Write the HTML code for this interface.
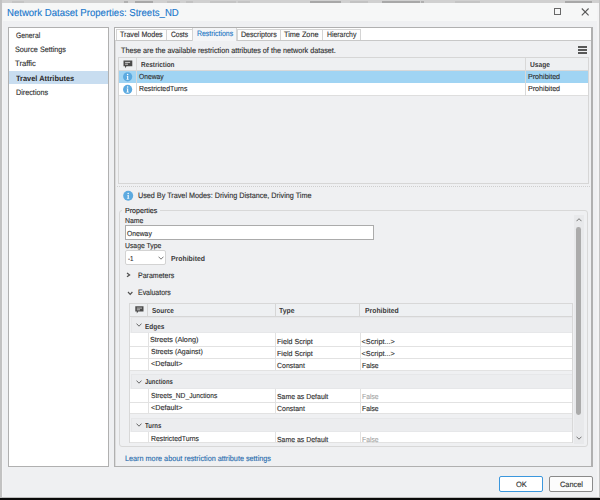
<!DOCTYPE html>
<html><head><meta charset="utf-8">
<style>
html,body{margin:0;padding:0;}
body{width:600px;height:500px;position:relative;overflow:hidden;background:#eff0f2;font-family:"Liberation Sans",sans-serif;text-rendering:geometricPrecision;}
div{position:absolute;box-sizing:border-box;}
.t{white-space:nowrap;line-height:12px;height:12px;transform-origin:0 0;-webkit-text-stroke:0.12px currentColor;}
.bl{display:inline-block;width:0;height:0;}
</style></head><body>
<!-- window chrome -->
<div style="left:0;top:0;width:600px;height:3px;background:#d0d0d0"></div>
<div style="left:12px;top:0.5px;width:12px;height:2px;background:#c4c4c4"></div>
<div style="left:124px;top:0.5px;width:4px;height:2px;background:#b0b0b0"></div>
<div style="left:135px;top:0.5px;width:18px;height:2px;background:#a8a8a8"></div>
<div style="left:167px;top:0.5px;width:13px;height:2px;background:#c2c2c2"></div>
<div style="left:186px;top:0.5px;width:7px;height:2px;background:#c2c2c2"></div>
<div style="left:210px;top:0.5px;width:26px;height:2px;background:#c4c4c4"></div>
<div style="left:238px;top:0.5px;width:12px;height:2px;background:#c4c4c4"></div>
<div style="left:310px;top:0.5px;width:31px;height:2px;background:#a8a8a8"></div>
<div style="left:350px;top:0.5px;width:18px;height:2px;background:#c2c2c2"></div>
<div style="left:382px;top:0.5px;width:38px;height:2px;background:#a8a8a8"></div>
<div style="left:421px;top:0.5px;width:3px;height:2px;background:#b0b0b0"></div>
<div style="left:455px;top:0.5px;width:25px;height:2px;background:#c4c4c4"></div>
<div style="left:565px;top:0.5px;width:27px;height:2px;background:#a8a8a8"></div>
<div style="left:0;top:0;width:2px;height:500px;background:#c2c2c2"></div>
<div style="left:2px;top:3px;width:1px;height:494px;background:#f4f4f5"></div>
<div style="left:599px;top:0;width:1px;height:500px;background:#c4c4c4"></div>
<div style="left:597px;top:3px;width:2px;height:494px;background:#f4f4f5"></div>
<div style="left:0;top:497px;width:600px;height:1px;background:#bdbdbd"></div>
<div style="left:0;top:498px;width:600px;height:2px;background:#0a0a0a"></div>
<div style="left:3px;top:3px;width:594px;height:18px;background:#f6f7f7"></div>
<!-- maximize / close -->
<div style="left:554px;top:8px;width:7px;height:7px;border:1.1px solid #686868"></div>
<svg style="position:absolute;left:581px;top:8px" width="9" height="8" viewBox="0 0 9 8"><path d="M0.8 0.5 L7.6 7.3 M7.6 0.5 L0.8 7.3" stroke="#585858" stroke-width="1.1"/></svg>
<!-- left panel -->
<div style="left:8px;top:27px;width:101px;height:440px;background:#fff;border:1px solid #b0b0b0"></div>
<div style="left:9px;top:71px;width:99px;height:13px;background:#c8ddf0"></div>
<!-- right outer panel -->
<div style="left:114px;top:27px;width:479px;height:440px;background:#fff;border:1px solid #b0b0b0;border-right:2px solid #b0b0b0"></div>
<!-- tab content -->
<div style="left:115px;top:40px;width:476px;height:426px;background:#eff0f2;border-top:1px solid #c8c8c8;border-left:1px solid #dcdcdc"></div>
<!-- tabs -->
<div style="left:116px;top:29px;width:51px;height:11px;background:#fdfdfd;border:1px solid #d4d4d4;border-bottom:none"></div>
<div style="left:166px;top:29px;width:27px;height:11px;background:#fdfdfd;border:1px solid #d4d4d4;border-bottom:none"></div>
<div style="left:237px;top:29px;width:44px;height:11px;background:#fdfdfd;border:1px solid #d4d4d4;border-bottom:none"></div>
<div style="left:280px;top:29px;width:43px;height:11px;background:#fdfdfd;border:1px solid #d4d4d4;border-bottom:none"></div>
<div style="left:322px;top:29px;width:39px;height:11px;background:#fdfdfd;border:1px solid #d4d4d4;border-bottom:none"></div>
<div style="left:192px;top:28px;width:45px;height:13px;background:#f4f5f7;border:1px solid #d4d4d4;border-top:none;border-bottom:none"></div>
<!-- hamburger -->
<div style="left:578px;top:46.1px;width:9px;height:1.7px;background:#585858"></div>
<div style="left:578px;top:49.1px;width:9px;height:1.7px;background:#585858"></div>
<div style="left:578px;top:52.2px;width:9px;height:1.7px;background:#585858"></div>
<!-- restriction list -->
<div style="left:118px;top:57px;width:471px;height:127px;background:#eff0f2;border:1px solid #d6d6d6"></div>
<div style="left:119px;top:58px;width:469px;height:13px;background:#eef0f2;border-bottom:1px solid #d8d8d8"></div>
<div style="left:119px;top:71px;width:469px;height:12px;background:#a0d4f3"></div>
<div style="left:119px;top:83px;width:469px;height:13px;background:#fff;border-bottom:1px solid #dedede"></div>
<div style="left:136px;top:58px;width:1px;height:38px;background:#d8d8d8"></div>
<div style="left:525px;top:58px;width:1px;height:38px;background:#d8d8d8"></div>
<!-- comment icon header -->
<svg style="position:absolute;left:123px;top:60px" width="10" height="9" viewBox="0 0 10 9"><path d="M0.5 0.5 H9.3 V6.3 H3.5 L2 8.2 V6.3 H0.5 Z" fill="#4b4b4b"/><path d="M2.1 2.4 H7.1 M2.1 4.2 H5" stroke="#f0f0f0" stroke-width="0.8"/></svg>
<!-- info icons -->
<svg style="position:absolute;left:121px;top:70px" width="12" height="12" viewBox="0 0 12 12"><circle cx="6.65" cy="6.80" r="4.6" fill="#5caae0"/><path d="M5.75 6.00 H7.20 V9.20 H7.85 V9.80 H5.35 V9.20 H6.10 V6.60 H5.75 Z" fill="#fff"/><circle cx="6.65" cy="4.50" r="0.75" fill="#fff"/></svg>
<svg style="position:absolute;left:121px;top:83px" width="12" height="12" viewBox="0 0 12 12"><circle cx="6.65" cy="6.40" r="4.6" fill="#5caae0"/><path d="M5.75 5.60 H7.20 V8.80 H7.85 V9.40 H5.35 V8.80 H6.10 V6.20 H5.75 Z" fill="#fff"/><circle cx="6.65" cy="4.10" r="0.75" fill="#fff"/></svg>
<!-- splitter dotted -->
<div style="left:117px;top:186px;width:473px;height:1px;border-top:1px dotted #cfcfcf"></div>
<!-- used by info icon -->
<svg style="position:absolute;left:122px;top:189px" width="12" height="12" viewBox="0 0 12 12"><circle cx="6.20" cy="6.80" r="5.0" fill="#5caae0"/><path d="M5.30 6.00 H6.75 V9.20 H7.40 V9.80 H4.90 V9.20 H5.65 V6.60 H5.30 Z" fill="#fff"/><circle cx="6.20" cy="4.50" r="0.75" fill="#fff"/></svg>
<!-- properties group box -->
<div style="left:119px;top:210px;width:469px;height:236.5px;border:1px solid #d8d8d8;border-radius:3px"></div>
<div style="left:122px;top:207px;width:38px;height:5px;background:#eff0f2"></div>
<!-- name input -->
<div style="left:125px;top:225px;width:249px;height:15px;background:#fff;border:1px solid #ababab"></div>
<!-- dropdown -->
<div style="left:125px;top:250px;width:41px;height:15px;background:#fff;border:1px solid #d3d3d3;border-radius:2px"></div>
<svg style="position:absolute;left:157.5px;top:255.5px" width="6" height="4" viewBox="0 0 6 4"><path d="M0.5 0.7 L3 3.2 L5.5 0.7" fill="none" stroke="#666" stroke-width="0.9"/></svg>
<!-- chevrons -->
<svg style="position:absolute;left:126px;top:272px" width="6" height="6" viewBox="0 0 6 6"><path d="M1 1 L3.6 2.9 L1 4.8" fill="none" stroke="#505050" stroke-width="1.25"/></svg>
<svg style="position:absolute;left:126.5px;top:290.5px" width="7" height="5" viewBox="0 0 7 5"><path d="M1 1 L3.2 3.4 L5.4 1" fill="none" stroke="#505050" stroke-width="1.15"/></svg>
<!-- eval table -->
<div style="left:129px;top:303px;width:444px;height:140px;background:#eff0f2;border:1px solid #d8d8d8;border-bottom:none"></div>
<div style="left:130px;top:304px;width:442px;height:12.5px;background:#eef0f2;border-bottom:1px solid #d6d6d6"></div>
<div style="left:147px;top:304px;width:1px;height:12px;background:#d6d6d6"></div>
<div style="left:275px;top:304px;width:1px;height:12px;background:#d6d6d6"></div>
<div style="left:359px;top:304px;width:1px;height:12px;background:#d6d6d6"></div>
<svg style="position:absolute;left:134.5px;top:306px" width="9" height="8" viewBox="0 0 9 8"><path d="M0.3 0.3 H8.5 V5.6 H3.2 L1.8 7.5 V5.6 H0.3 Z" fill="#4b4b4b"/><path d="M1.8 2.1 H7 M1.8 3.8 H5" stroke="#f0f0f0" stroke-width="0.7"/></svg>
<div style="left:131px;top:316.5px;width:441px;height:16.80000000000001px;background:#ecedef;border:1px solid #e6e7e9;border-right:none"></div>
<svg style="position:absolute;left:135.6px;top:323.20px" width="6" height="4" viewBox="0 0 6 4"><path d="M0.5 0.6 L3 3.2 L5.5 0.6" fill="none" stroke="#606060" stroke-width="0.95"/></svg>
<div style="left:130px;top:333.3px;width:442px;height:13.699999999999989px;background:#fff;border-bottom:1px solid #e2e2e2"></div>
<div style="left:148.3px;top:333.3px;width:1px;height:13.699999999999989px;background:#e2e2e2"></div>
<div style="left:275px;top:333.3px;width:1px;height:13.699999999999989px;background:#e2e2e2"></div>
<div style="left:359.5px;top:333.3px;width:1px;height:13.699999999999989px;background:#e2e2e2"></div>
<div style="left:130px;top:347px;width:442px;height:12px;background:#fff;border-bottom:1px solid #e2e2e2"></div>
<div style="left:148.3px;top:347px;width:1px;height:12px;background:#e2e2e2"></div>
<div style="left:275px;top:347px;width:1px;height:12px;background:#e2e2e2"></div>
<div style="left:359.5px;top:347px;width:1px;height:12px;background:#e2e2e2"></div>
<div style="left:130px;top:359px;width:442px;height:12px;background:#fff;border-bottom:1px solid #e2e2e2"></div>
<div style="left:148.3px;top:359px;width:1px;height:12px;background:#e2e2e2"></div>
<div style="left:275px;top:359px;width:1px;height:12px;background:#e2e2e2"></div>
<div style="left:359.5px;top:359px;width:1px;height:12px;background:#e2e2e2"></div>
<div style="left:131px;top:374px;width:441px;height:15px;background:#ecedef;border:1px solid #e6e7e9;border-right:none"></div>
<svg style="position:absolute;left:135.6px;top:379.80px" width="6" height="4" viewBox="0 0 6 4"><path d="M0.5 0.6 L3 3.2 L5.5 0.6" fill="none" stroke="#606060" stroke-width="0.95"/></svg>
<div style="left:130px;top:389px;width:442px;height:13.5px;background:#fff;border-bottom:1px solid #e2e2e2"></div>
<div style="left:148.3px;top:389px;width:1px;height:13.5px;background:#e2e2e2"></div>
<div style="left:275px;top:389px;width:1px;height:13.5px;background:#e2e2e2"></div>
<div style="left:359.5px;top:389px;width:1px;height:13.5px;background:#e2e2e2"></div>
<div style="left:130px;top:402.5px;width:442px;height:11.5px;background:#fff;border-bottom:1px solid #e2e2e2"></div>
<div style="left:148.3px;top:402.5px;width:1px;height:11.5px;background:#e2e2e2"></div>
<div style="left:275px;top:402.5px;width:1px;height:11.5px;background:#e2e2e2"></div>
<div style="left:359.5px;top:402.5px;width:1px;height:11.5px;background:#e2e2e2"></div>
<div style="left:131px;top:418px;width:441px;height:14px;background:#ecedef;border:1px solid #e6e7e9;border-right:none"></div>
<svg style="position:absolute;left:135.6px;top:423.30px" width="6" height="4" viewBox="0 0 6 4"><path d="M0.5 0.6 L3 3.2 L5.5 0.6" fill="none" stroke="#606060" stroke-width="0.95"/></svg>
<div style="left:130px;top:432px;width:442px;height:11px;background:#fff;border-bottom:1px solid #e2e2e2"></div>
<div style="left:148.3px;top:432px;width:1px;height:11px;background:#e2e2e2"></div>
<div style="left:275px;top:432px;width:1px;height:11px;background:#e2e2e2"></div>
<div style="left:359.5px;top:432px;width:1px;height:11px;background:#e2e2e2"></div>
<!-- scrollbar -->
<div style="left:574px;top:215px;width:10px;height:229px;background:#e8e9eb"></div>
<svg style="position:absolute;left:576px;top:217.5px" width="6" height="4" viewBox="0 0 6 4"><path d="M0.5 3.2 L3 0.7 L5.5 3.2" fill="none" stroke="#666" stroke-width="0.9"/></svg>
<div style="left:576.2px;top:226.5px;width:4.8px;height:188.5px;background:#ababab;border-radius:2.4px"></div>
<svg style="position:absolute;left:576px;top:435.5px" width="6" height="4" viewBox="0 0 6 4"><path d="M0.5 0.7 L3 3.2 L5.5 0.7" fill="none" stroke="#666" stroke-width="0.9"/></svg>
<!-- buttons -->
<div style="left:499px;top:476px;width:44px;height:16px;background:#fff;border:1.2px solid #3b97dd;border-radius:2px"></div>
<div style="left:549px;top:476px;width:44px;height:16px;background:#fcfcfc;border:1.3px solid #8a8a8a;border-radius:2px"></div>

<div class=t style="left:7.20px;top:8px;font-size:10.1px;font-weight:400;color:#1676cb;transform:scaleX(0.9478)">Network Dataset Properties: Streets_ND</div>
<div class=t style="left:15.90px;top:30px;font-size:7.8px;font-weight:400;color:#2d2d2d;transform:scaleX(0.8715)">General</div>
<div class=t style="left:14.90px;top:44px;font-size:7.8px;font-weight:400;color:#2d2d2d;transform:scaleX(0.9259)">Source Settings</div>
<div class=t style="left:14.90px;top:58px;font-size:7.8px;font-weight:400;color:#2d2d2d;transform:scaleX(0.9803)">Traffic</div>
<div class=t style="left:15.90px;top:73px;font-size:7.8px;font-weight:700;color:#2a2a2a;transform:scaleX(0.9493);-webkit-text-stroke:0">Travel Attributes</div>
<div class=t style="left:15.90px;top:87px;font-size:7.8px;font-weight:400;color:#2d2d2d;transform:scaleX(0.9271)">Directions</div>
<div class=t style="left:119.70px;top:29px;font-size:7.8px;font-weight:400;color:#2d2d2d;transform:scaleX(0.9088)">Travel Modes</div>
<div class=t style="left:171.30px;top:29px;font-size:7.8px;font-weight:400;color:#2d2d2d;transform:scaleX(0.8562)">Costs</div>
<div class=t style="left:196.50px;top:28px;font-size:7.8px;font-weight:400;color:#1a75c4;transform:scaleX(0.8880)">Restrictions</div>
<div class=t style="left:240.50px;top:29px;font-size:7.8px;font-weight:400;color:#2d2d2d;transform:scaleX(0.9065)">Descriptors</div>
<div class=t style="left:283.90px;top:29px;font-size:7.8px;font-weight:400;color:#2d2d2d;transform:scaleX(0.9334)">Time Zone</div>
<div class=t style="left:326.70px;top:29px;font-size:7.8px;font-weight:400;color:#2d2d2d;transform:scaleX(0.8803)">Hierarchy</div>
<div class=t style="left:120.60px;top:45px;font-size:7.8px;font-weight:400;color:#2d2d2d;transform:scaleX(0.9247)">These are the available restriction attributes of the network dataset.</div>
<div class=t style="left:140.90px;top:59px;font-size:7.3px;font-weight:700;color:#3a3a3a;transform:scaleX(0.8790);-webkit-text-stroke:0">Restriction</div>
<div class=t style="left:529.70px;top:59px;font-size:7.3px;font-weight:700;color:#3a3a3a;transform:scaleX(0.9091);-webkit-text-stroke:0">Usage</div>
<div class=t style="left:139.00px;top:71px;font-size:7.3px;font-weight:400;color:#2d2d2d;transform:scaleX(0.9198)">Oneway</div>
<div class=t style="left:527.90px;top:71px;font-size:7.3px;font-weight:400;color:#2d2d2d;transform:scaleX(0.9760)">Prohibited</div>
<div class=t style="left:139.00px;top:83px;font-size:7.3px;font-weight:400;color:#2d2d2d;transform:scaleX(0.9433)">RestrictedTurns</div>
<div class=t style="left:527.90px;top:83px;font-size:7.3px;font-weight:400;color:#2d2d2d;transform:scaleX(0.9760)">Prohibited</div>
<div class=t style="left:138.20px;top:190px;font-size:7.8px;font-weight:400;color:#2d2d2d;transform:scaleX(0.9267)">Used By Travel Modes: Driving Distance, Driving Time</div>
<div class=t style="left:124.50px;top:205px;font-size:7.3px;font-weight:400;color:#1e1e1e;transform:scaleX(0.9697)">Properties</div>
<div class=t style="left:125.20px;top:215px;font-size:7.3px;font-weight:400;color:#2d2d2d;transform:scaleX(0.9431)">Name</div>
<div class=t style="left:127.00px;top:228px;font-size:7.3px;font-weight:400;color:#2d2d2d;transform:scaleX(0.9246)">Oneway</div>
<div class=t style="left:125.20px;top:240px;font-size:7.3px;font-weight:400;color:#2d2d2d;transform:scaleX(0.9361)">Usage Type</div>
<div class=t style="left:127.80px;top:253px;font-size:7.3px;font-weight:400;color:#2d2d2d;transform:scaleX(0.8500)">-1</div>
<div class=t style="left:170.70px;top:253px;font-size:7.3px;font-weight:700;color:#3a3a3a;transform:scaleX(0.9419);-webkit-text-stroke:0">Prohibited</div>
<div class=t style="left:138.00px;top:270px;font-size:7.8px;font-weight:400;color:#2d2d2d;transform:scaleX(0.9000)">Parameters</div>
<div class=t style="left:138.00px;top:287px;font-size:7.8px;font-weight:400;color:#2d2d2d;transform:scaleX(0.8897)">Evaluators</div>
<div class=t style="left:152.00px;top:305px;font-size:7.3px;font-weight:700;color:#3a3a3a;transform:scaleX(0.8847);-webkit-text-stroke:0">Source</div>
<div class=t style="left:279.00px;top:305px;font-size:7.3px;font-weight:700;color:#3a3a3a;transform:scaleX(0.9375);-webkit-text-stroke:0">Type</div>
<div class=t style="left:364.60px;top:305px;font-size:7.3px;font-weight:700;color:#3a3a3a;transform:scaleX(0.9361);-webkit-text-stroke:0">Prohibited</div>
<div class=t style="left:145.20px;top:321px;font-size:7.3px;font-weight:700;color:#3a3a3a;transform:scaleX(0.8831);-webkit-text-stroke:0">Edges</div>
<div class=t style="left:145.20px;top:376px;font-size:7.3px;font-weight:700;color:#3a3a3a;transform:scaleX(0.8060);-webkit-text-stroke:0">Junctions</div>
<div class=t style="left:145.20px;top:420px;font-size:7.3px;font-weight:700;color:#3a3a3a;transform:scaleX(0.8217);-webkit-text-stroke:0">Turns</div>
<div class=t style="left:149.90px;top:334px;font-size:7.3px;font-weight:400;color:#2d2d2d;transform:scaleX(0.9936)">Streets (Along)</div>
<div class=t style="left:276.60px;top:336px;font-size:7.3px;font-weight:400;color:#2d2d2d;transform:scaleX(0.9780)">Field Script</div>
<div class=t style="left:361.60px;top:336px;font-size:7.3px;font-weight:400;color:#2d2d2d;transform:scaleX(1.0000)">&lt;Script...&gt;</div>
<div class=t style="left:150.90px;top:346px;font-size:7.3px;font-weight:400;color:#2d2d2d;transform:scaleX(0.9516)">Streets (Against)</div>
<div class=t style="left:276.60px;top:348px;font-size:7.3px;font-weight:400;color:#2d2d2d;transform:scaleX(0.9780)">Field Script</div>
<div class=t style="left:361.60px;top:348px;font-size:7.3px;font-weight:400;color:#2d2d2d;transform:scaleX(1.0000)">&lt;Script...&gt;</div>
<div class=t style="left:150.90px;top:358px;font-size:7.3px;font-weight:400;color:#2d2d2d;transform:scaleX(0.9940)">&lt;Default&gt;</div>
<div class=t style="left:276.60px;top:360px;font-size:7.3px;font-weight:400;color:#2d2d2d;transform:scaleX(0.9552)">Constant</div>
<div class=t style="left:361.60px;top:360px;font-size:7.3px;font-weight:400;color:#2d2d2d;transform:scaleX(0.9305)">False</div>
<div class=t style="left:150.90px;top:390px;font-size:7.3px;font-weight:400;color:#2d2d2d;transform:scaleX(0.9130)">Streets_ND_Junctions</div>
<div class=t style="left:276.60px;top:391px;font-size:7.3px;font-weight:400;color:#2d2d2d;transform:scaleX(0.9493)">Same as Default</div>
<div class=t style="left:361.60px;top:391px;font-size:7.3px;font-weight:400;color:#a6a6a6;transform:scaleX(0.9305)">False</div>
<div class=t style="left:150.90px;top:402px;font-size:7.3px;font-weight:400;color:#2d2d2d;transform:scaleX(0.9940)">&lt;Default&gt;</div>
<div class=t style="left:276.60px;top:403px;font-size:7.3px;font-weight:400;color:#2d2d2d;transform:scaleX(0.9552)">Constant</div>
<div class=t style="left:361.60px;top:403px;font-size:7.3px;font-weight:400;color:#2d2d2d;transform:scaleX(0.9305)">False</div>
<div class=t style="left:150.90px;top:433px;font-size:7.3px;font-weight:400;color:#2d2d2d;transform:scaleX(0.9374)">RestrictedTurns</div>
<div class=t style="left:276.60px;top:434px;font-size:7.3px;font-weight:400;color:#2d2d2d;transform:scaleX(0.9493)">Same as Default</div>
<div class=t style="left:361.60px;top:434px;font-size:7.3px;font-weight:400;color:#a6a6a6;transform:scaleX(0.9305)">False</div>
<div class=t style="left:124.50px;top:453px;font-size:7.8px;font-weight:400;color:#276cae;transform:scaleX(0.9302)">Learn more about restriction attribute settings</div>
<div class=t style="left:516.00px;top:479px;font-size:7.8px;font-weight:400;color:#2d2d2d;transform:scaleX(0.9647)">OK</div>
<div class=t style="left:559.80px;top:479px;font-size:7.8px;font-weight:400;color:#2d2d2d;transform:scaleX(0.9419)">Cancel</div>
</body></html>
